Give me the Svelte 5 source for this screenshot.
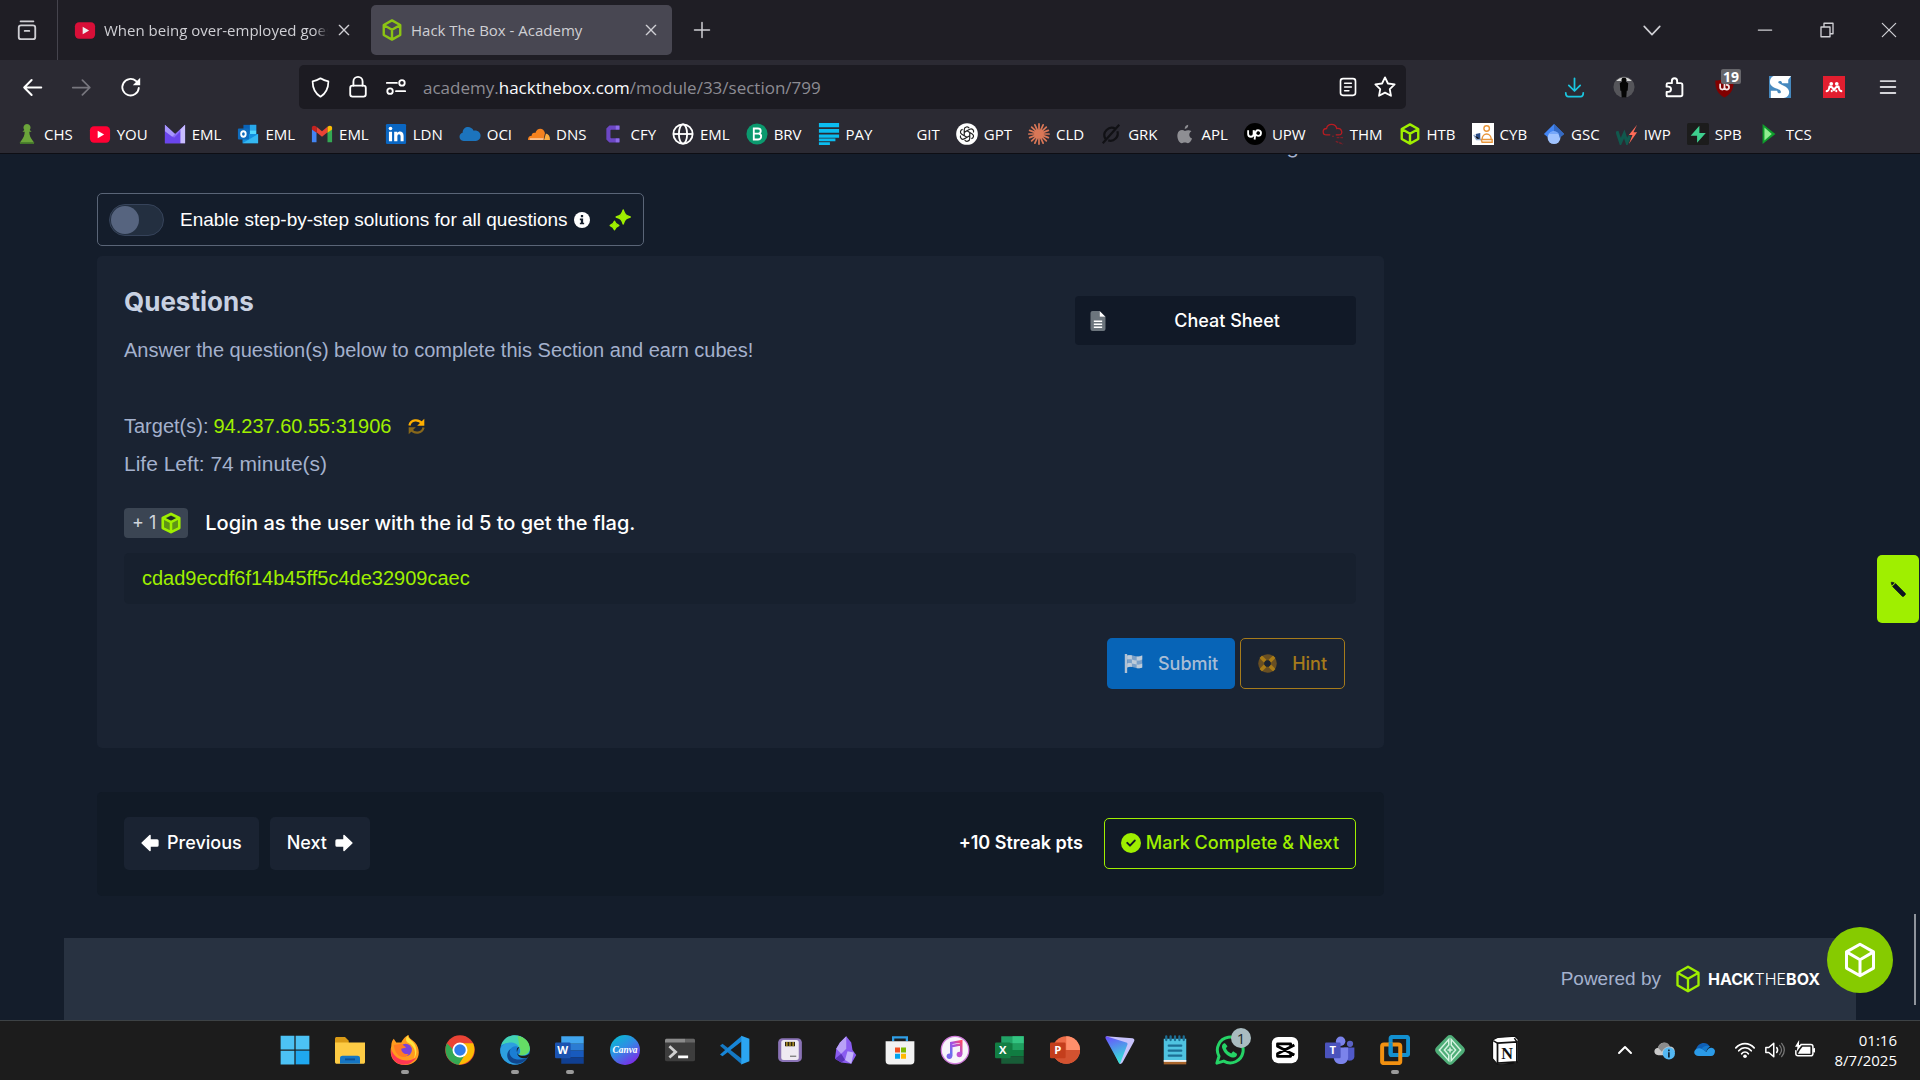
<script lang="ts">
	type Item = {
		icon: string;
		label: string;
		running?: boolean;
		badge?: string;
	};

	const bookmarks: Item[] = [
		{ icon: 'pawn', label: 'CHS' },
		{ icon: 'youtube', label: 'YOU' },
		{ icon: 'proton', label: 'EML' },
		{ icon: 'outlook', label: 'EML' },
		{ icon: 'gmail', label: 'EML' },
		{ icon: 'linkedin', label: 'LDN' },
		{ icon: 'cloud', label: 'OCI' },
		{ icon: 'cloudflare', label: 'DNS' },
		{ icon: 'cfy', label: 'CFY' },
		{ icon: 'globe', label: 'EML' },
		{ icon: 'brevo', label: 'BRV' },
		{ icon: 'pay', label: 'PAY' },
		{ icon: 'blank', label: 'GIT' },
		{ icon: 'gpt', label: 'GPT' },
		{ icon: 'claude', label: 'CLD' },
		{ icon: 'grok', label: 'GRK' },
		{ icon: 'apple', label: 'APL' },
		{ icon: 'upwork', label: 'UPW' },
		{ icon: 'thm', label: 'THM' },
		{ icon: 'htb', label: 'HTB' },
		{ icon: 'cyb', label: 'CYB' },
		{ icon: 'scholar', label: 'GSC' },
		{ icon: 'iwp', label: 'IWP' },
		{ icon: 'supabase', label: 'SPB' },
		{ icon: 'tcs', label: 'TCS' }
	];

	const apps: Item[] = [
		{ icon: 'windows', label: 'Start' },
		{ icon: 'explorer', label: 'File Explorer' },
		{ icon: 'firefox', label: 'Firefox', running: true },
		{ icon: 'chrome', label: 'Chrome' },
		{ icon: 'edge', label: 'Edge', running: true },
		{ icon: 'word', label: 'Word', running: true },
		{ icon: 'canva', label: 'Canva' },
		{ icon: 'terminal', label: 'Terminal' },
		{ icon: 'vscode', label: 'Visual Studio Code' },
		{ icon: 'disk', label: 'Disk tool' },
		{ icon: 'obsidian', label: 'Obsidian' },
		{ icon: 'store', label: 'Microsoft Store' },
		{ icon: 'itunes', label: 'iTunes' },
		{ icon: 'excel', label: 'Excel' },
		{ icon: 'powerpoint', label: 'PowerPoint' },
		{ icon: 'vpn', label: 'VPN' },
		{ icon: 'notepad', label: 'Notepad' },
		{ icon: 'whatsapp', label: 'WhatsApp', badge: '1' },
		{ icon: 'capcut', label: 'CapCut' },
		{ icon: 'teams', label: 'Teams' },
		{ icon: 'vmware', label: 'VMware', running: true },
		{ icon: 'keeper', label: 'Passwords' },
		{ icon: 'notion', label: 'Notion' }
	];

	const cube = 'M12 1.5 21 6.6v10.8l-9 5.1-9-5.1V6.6zM3 6.6l9 5.2 9-5.2M12 11.8v10.7';
	const line = 'fill="none" stroke="currentColor" stroke-linecap="round" stroke-linejoin="round"';

	// every drawing lives in a 24x24 box
	const icons: Record<string, string> = {
		blank: '',
		// browser chrome
		view: `<g ${line} stroke-width="2"><rect x="3" y="7" width="18" height="15" rx="2.5"/><path d="M5 2.5h14M9.500 13h5"/></g>`,
		close: `<path ${line} stroke-width="2" d="M5 5l14 14M19 5 5 19"/>`,
		thinClose: `<path ${line} stroke-width="1.500" d="M4 4l16 16M20 4 4 20"/>`,
		plus: `<path ${line} stroke-width="1.800" d="M12 3v18M3 12h18"/>`,
		chevronDown: `<path ${line} stroke-width="1.800" d="M3.500 8l8.500 9 8.500-9"/>`,
		chevronUp: `<path ${line} stroke-width="2.600" d="M4 16l8-8 8 8"/>`,
		minimise: `<path ${line} stroke-width="1.500" d="M4 12h16"/>`,
		restore: `<path ${line} stroke-width="1.800" stroke-linecap="butt" d="M4 8h12v13H4zM8 7V3h12v14h-3"/>`,
		back: `<path ${line} stroke-width="2.300" d="M22 12H2.500M11 3.500 2.500 12l8.500 8.500"/>`,
		forward: `<path ${line} stroke-width="2" d="M2 12h19.500M13 3.500l8.500 8.500-8.500 8.500"/>`,
		reload: `<path ${line} stroke-width="2" d="M20.500 13a9 9 0 1 1-3-7.500l2.500 2"/><path fill="currentColor" d="M22 2v8h-8z"/>`,
		shield: `<path ${line} stroke-width="2" d="M12 1.500c3 2 6 3 9 3.500 0 8-2 13-9 17.500C5 18 3 13 3 5c3-.5 6-1.500 9-3.500z"/>`,
		lock: `<g ${line} stroke-width="2"><rect x="3.500" y="10.500" width="17" height="12" rx="2.500"/><path d="M7 10.500V6a5 5 0 0 1 10 0v4.500"/></g>`,
		permissions: `<g ${line} stroke-width="2"><path d="M2 7.500h11M12 16.500h10"/><circle cx="18.500" cy="7.500" r="3"/><circle cx="5.500" cy="16.500" r="3"/></g>`,
		reader: `<g ${line} stroke-width="2"><rect x="3" y="2" width="18" height="20" rx="3"/><path d="M8 7.500h8M8 12h8M8 16.500h5"/></g>`,
		star: `<path ${line} stroke-width="2" d="M12 1.500l3.200 6.700 7.300 1-5.300 5.100 1.300 7.300L12 18.100l-6.500 3.500 1.300-7.300L1.500 9.200l7.300-1z"/>`,
		download: `<path ${line} stroke-width="2" d="M12 1.500v14M5.500 9.500l6.500 6.500 6.500-6.500M2 18c0 3 1 4.500 3 4.500h14c2 0 3-1.500 3-4.500"/>`,
		ninja: `<circle cx="12" cy="12" r="11.500" fill="#55555a"/><path fill="#d8d8d8" d="M3.500 5.500C8 .5 16 .5 20.500 5.500z"/><path fill="#050505" d="M12 2a2.300 2.300 0 0 1 2 4l2.600 2-.6 8h-1l-.5 7.500H9.500L9 16H8l-.6-8L10 6a2.300 2.300 0 0 1 2-4z"/>`,
		puzzle: `<path ${line} stroke-width="2.200" d="M4 22h15a2 2 0 0 0 2-2V9a2 2 0 0 0-2-2h-4V4.500a3 3 0 0 0-6 0V7H4.500A1.500 1.500 0 0 0 3 8.500V11h2a2.800 2.800 0 0 1 0 6H3v4a1 1 0 0 0 1 1z"/>`,
		ublock: `<path fill="#800000" d="M12 1c3 2 6.500 3 10.500 3 0 9-2 15-10.500 19.500C3.500 19 1.500 13 1.500 4 5.500 4 9 3 12 1z"/><path fill="none" stroke="#f2e6e6" stroke-width="2" stroke-linecap="round" d="M7 8.500v3.300a2.500 2.500 0 0 0 5 0V8.500M12 11.800a2.600 2.600 0 0 0 5.200 0c0-1.800-1-2.800-2.700-2.800"/>`,
		scribe: `<path fill="#4689bf" d="M0 0h24v24H0z"/><path fill="#fff" d="M0 0h24l-3 4v4h-7c1-2.500-3-3.500-4-1.500 0 3 12 4 12 11 0 4-3 6.500-6 6.500H2v-8h7c0 3.500 4 3.500 4 1.500C13 13 1 14 1 6.500 1 3 3 1 5 0z"/>`,
		mendeley: `<path fill="#e21e2f" d="M0 0h24v24H0z"/><circle cx="9" cy="8.500" r="2" fill="#fff"/><circle cx="15" cy="8.500" r="2" fill="#fff"/><path fill="none" stroke="#fff" stroke-width="2.200" stroke-linecap="round" stroke-linejoin="round" d="M4 16.500c2 0 2.500-1.500 3-5 2.500 0 4 1.500 5 4 1-2.500 2.500-4 5-4 .5 3.500 1 5 3 5M9.500 16.500v-.5M14.500 16.500v-.5"/>`,
		menu: `<path ${line} stroke-width="2" d="M4 5.500h16M4 12h16M4 18.500h16"/>`,
		// bookmarks
		pawn: `<path fill="#6ba53a" d="M12 1a4 4 0 0 1 3 6.500l2 2h-2.500c0 4 1.500 7 4 10 1.500 1.500 1 3.500 0 3.500h-13c-1 0-1.500-2 0-3.500 2.500-3 4-6 4-10H7l2-2A4 4 0 0 1 12 1z"/><path fill="#42752a" d="M4 21h16c0 1.500-1 2-2 2H6c-1 0-2-.5-2-2z"/>`,
		youtube: `<rect x="1" y="3.500" width="22" height="18" rx="4.500" fill="#f03"/><path fill="#fff" d="M9.500 8.500v8l7-4z"/>`,
		youtubeDim: `<rect x="1" y="3.500" width="22" height="18" rx="4.500" fill="#d80f38"/><path fill="#eee" d="M9.500 8.500v8l7-4z"/>`,
		proton: `<path fill="#8a6cf7" d="M1 2l11 10L23 2v20H1z"/><path fill="#6a45ec" d="M1 22V8l10 8 7-7v13z"/><path fill="#a795ff" d="M1 2l11 10-3 3L1 9z"/><path fill="#c9bdff" d="M18 7l5-5v20h-5z"/>`,
		outlook: `<path fill="#0a63b8" d="M7 2h14v12H7z"/><path fill="#28a8ea" d="M14 2h7v6h-7z"/><path fill="#50d9ff" d="M14 8h7v5h-7z"/><path fill="#1490df" d="M6 12h17v10H6z"/><path fill="#35b8f1" d="M6 22l17-10v10z"/><rect x="1" y="6" width="12" height="12" rx="1" fill="#0f6cbd"/><ellipse cx="7" cy="12" rx="2.500" ry="3" fill="none" stroke="#fff" stroke-width="2"/>`,
		gmail: `<path fill="#4285f4" d="M1 21V6l5 4v11z"/><path fill="#34a853" d="M18 21V10l5-4v15z"/><path fill="#ea4335" d="M6 10V4l6 5 6-5v6l-6 5z"/><path fill="#c5221f" d="M1 7V5c0-2 2.500-3 5-1v6.500z"/><path fill="#fbbc04" d="M23 7V5c0-2-2.500-3-5-1v6.500z"/>`,
		linkedin: `<rect x="1" y="1" width="22" height="22" rx="1.500" fill="#0a66c2"/><circle cx="6" cy="6" r="2" fill="#fff"/><path fill="#fff" d="M4.300 9.500h3.400V20H4.300zM10 9.500h3.300v1.500c1.500-2.500 7-2.500 7 3V20H17v-5.500c0-3-3.500-3-3.500 0V20H10z"/>`,
		cloud: `<path fill="#1c74bd" d="M5 19.500C-1 19.500-.5 11 4 10.500 4 3.500 13 2 16 8.500c4-1 8 2 7.500 6-.2 3-2.500 5-5 5z"/>`,
		cloudflare: `<path fill="#f6821f" d="M0 18.500c0-3 1.500-4.500 4-4.500 0-2.500 2-4 4-3C9.500 5 17 4.500 18.500 11l-1.500 7.500z"/><path fill="#fbad41" d="M17.500 18.500l2-7c3 .5 4.500 3 4.500 7z"/><path stroke="#fff" d="M2 17.500h15"/>`,
		cfy: `<path fill="none" stroke="#6c47c4" stroke-width="4.500" d="M19 5H9L7 7v10l2 2h10"/><path stroke="#8d6ce8" stroke-width="4" d="M15 5h4M15 19h4"/>`,
		globe: `<g fill="none" stroke="#fff" stroke-width="2"><circle cx="12" cy="12" r="10.500"/><ellipse cx="12" cy="12" rx="4.500" ry="10.500"/><path d="M1.500 12h21"/></g>`,
		brevo: `<circle cx="12" cy="12" r="11.500" fill="#0b996e"/><path fill="none" stroke="#fff" stroke-width="2" d="M8.500 18V6h4.500c4 0 4 5 .5 5.500H9.500h4.500c4 1 3 6.500-1 6.500z"/>`,
		pay: `<path fill="#0bbdf0" d="M1 0h22v4.500H1zM1 6.500h22v4H1zM1 12.500h22v3.500H1zM1 17h18v3H1zM1 21h12v3H1z"/>`,
		gpt: `<circle cx="12" cy="12" r="11.800" fill="#fff"/><g fill="none" stroke="#222" stroke-width="1.300"><path d="M9 10.300V7.200c0-3 4-4 5.500-1.500M15 10.300 12 8.500l-3 1.800v3.500l3 1.800 3-1.800zM15 10.300l2.700 1.600c2.500 1.500 1.500 5-1 5.200M15 13.800V17c0 3-4 4-5.500 1.500M9 13.800l-2.700-1.600c-2.500-1.500-1.500-5 1-5.200M12 8.500l3-1.700c2.500-1.500 5 1.200 4 3.600M12 15.600l-3 1.700c-2.500 1.500-5-1.200-4-3.600"/></g>`,
		claude: `<path stroke="#d97757" stroke-width="1.900" stroke-linecap="round" d="M12 1v22M1 12h22M4 4.500l16 15M20 4.500l-16 15M7.500 2l9 20M16.500 2l-9 20M1.800 8l20.400 8M22.200 8 1.800 16"/>`,
		grok: `<g fill="none" stroke="#111115" stroke-width="2.400"><path d="M17 6.500a8 8 0 0 0-11 11M19 9a8 8 0 0 1-10 10"/><path d="M3 22 21 2"/></g>`,
		apple: `<path fill="#8e8e93" d="M15.500 2c.3 2.700-1.800 4.500-3.800 4.500C11.500 4.200 13.300 2.300 15.500 2zM19 9c-3.600 2.300-2.700 6.700.7 8-.9 2.700-2.700 5-4.500 5-1.300 0-1.800-.7-3.400-.7s-2 .7-3.400.7C5.600 22 3 16.300 3.800 12.200c.8-4.500 5-5.400 8.100-3.600 2.200-1 5.400-1 7.100.4z"/>`,
		upwork: `<circle cx="12" cy="12" r="12" fill="#000"/><path fill="none" stroke="#fff" stroke-width="2" d="M4.500 8v4a3 3 0 0 0 6 0V8c1 4 2.500 6 5 6a3 3 0 1 0-2.800-4L11.500 18"/>`,
		thm: `<path fill="none" stroke="#b91c22" stroke-width="1.400" d="M5 13c-5 0-5-7 0-7 1-6 10-6 11 0 6-1 8 7 2 7h-3M4 13h5M12 14v1"/><path stroke="#7d1f28" stroke-width="1.500" stroke-dasharray="3 1" d="M16 16h7M15 20l8 3"/>`,
		htb: `<path fill="none" stroke="#9fef00" stroke-width="2.600" stroke-linejoin="round" d="${cube}"/>`,
		htbDim: `<path fill="none" stroke="#8cc414" stroke-width="2.600" stroke-linejoin="round" d="${cube}"/>`,
		cyb: `<path fill="#fff" d="M0 0h24v24H0z"/><g fill="none" stroke="#e8953a" stroke-width="1.500"><circle cx="16" cy="6" r="3"/><path d="M11 18c0-8 10-8 10 0M10 18h12v3H11z"/></g><path fill="#2a4c86" d="M4 12l5-1v6l-4 1z"/><path stroke="#8fa8cd" stroke-width="1.500" d="M2 13l3 5h5"/>`,
		scholar: `<path fill="#4285f4" d="M12 1 23 12l-5 4H6l-5-4z"/><circle cx="12" cy="16" r="7" fill="#a0c3ff"/><path fill="#356ac3" d="M12 1 23 12l-5 4c0-4-3-7-6-7z"/><path fill="#76a7fa" d="M6.500 12a6.500 6.500 0 0 1 11 0z"/>`,
		iwp: `<path fill="none" stroke="#11584d" stroke-width="3.500" d="M1 9l4 12 4-9 3 9 3-7"/><path fill="#ff6b57" d="M23 2l-9 11h4l-4 10 9-13h-4z"/>`,
		supabase: `<rect width="24" height="24" rx="2" fill="#1c1c1c"/><path fill="#3ecf8e" d="M13.500 3v8h7L11 21.500V14H4z"/>`,
		tcs: `<path fill="#0f9d2c" d="M5 1l14 11L5 23z"/><path fill="#90ee90" d="M7 5l8 7-8 7z"/>`,
		// page
		info: `<circle cx="12" cy="12" r="12" fill="#fff"/><path fill="#141d2b" d="M10.300 4.500h3.400v3.300h-3.400zM8.800 9.800h4.900v6.400h1.500v2.300H8.800v-2.300h1.500v-4H8.800z"/>`,
		sparkles: `<path fill="#9fef00" stroke="#9fef00" stroke-width="1.500" stroke-linejoin="round" d="M15.500 1c1.600 5 2.700 6.100 7.700 7.700-5 1.600-6.100 2.700-7.700 7.700-1.600-5-2.700-6.100-7.700-7.700 5-1.600 6.100-2.700 7.700-7.700zM6 13.300c1 3 1.700 3.700 4.700 4.700-3 1-3.700 1.700-4.700 4.700-1-3-1.700-3.700-4.700-4.700 3-1 3.700-1.700 4.700-4.700z"/>`,
		file: `<path fill="#6c757d" d="M3 2.500A2.500 2.500 0 0 1 5.500 0H14v7h7v14.500a2.500 2.500 0 0 1-2.500 2.500h-13A2.500 2.500 0 0 1 3 21.500z"/><path fill="#fff" d="M14 0l7 7h-7zM7 11.500h10v1.800H7zM7 15h10v1.800H7zM7 18.500h10v1.800H7z"/>`,
		refresh: `<path fill="none" stroke="#ffaf00" stroke-width="3.200" d="M2 10.500C4 2 15 1 20 8"/><path fill="#ffaf00" d="M23 1v10H13z"/><path fill="none" stroke="#87671b" stroke-width="3.200" d="M22 13.500C20 22 9 23 4 16"/><path fill="#87671b" d="M1 23V13h10z"/>`,
		cubeSolid: `<path fill="#5e9317" d="M12 1 22 6v12l-10 5.500L2 18V6z"/><path fill="#1c2a26" d="M12 4l6 3-6 3-6-3z"/><path fill="none" stroke="#9fef00" stroke-width="2.800" stroke-linejoin="round" d="M12 2l9 4.500v11L12 22l-9-4.500v-11zM3 6.500l9 4.500 9-4.500M12 11v11"/>`,
		flag: `<path fill="#b1c1d3" d="M1 0h3v24H1z"/><path fill="#7aa0c8" d="M4 2c6-3 10 3 19 0v15c-8 3-12-3-19 0z"/><path fill="#bdcbd9" d="M4 2c2-.8 4-.7 6 0v5c-2-.7-4-.6-6 0zM16 3.500c2 .3 4 0 7-1.500v5c-3 1.500-5 1.600-7 1.300zM10 7c2 .5 4 1.200 6 1.300v5C14 13 12 12.400 10 12zM4 12c2-.7 4-.7 6 0v4.500c-2-.5-4-.5-6 .5zM16 13.300c2 .4 5 0 7-1.300v5c-3 1-5 1.200-7 1z"/>`,
		lifebuoy: `<circle cx="12" cy="12" r="8" fill="none" stroke="#694f22" stroke-width="7.500"/><path stroke="#a97b16" stroke-width="4.500" d="M3.500 3.500l5.500 5.500M20.500 3.500 15 9M3.500 20.500 9 15M20.500 20.500 15 15"/>`,
		arrowLeft: `<path fill="#fff" stroke="#fff" stroke-width="2" stroke-linejoin="round" d="M1.500 12 12 2v6h9.500c.6 0 1 .4 1 1v6c0 .6-.4 1-1 1H12v6z"/>`,
		arrowRight: `<path fill="#fff" stroke="#fff" stroke-width="2" stroke-linejoin="round" d="M22.500 12 12 2v6H2.500c-.6 0-1 .4-1 1v6c0 .6.4 1 1 1H12v6z"/>`,
		check: `<circle cx="12" cy="12" r="12" fill="#9fef00"/><path fill="none" stroke="#111a24" stroke-width="2.400" stroke-linecap="round" stroke-linejoin="round" d="M7.500 11.800l3.300 3.300 5.700-6"/>`,
		pencil: `<path fill="#0d1420" stroke="#0d1420" stroke-linejoin="round" d="M3 1.800l3.500 1L3 6.300l-1.200-3.500C1.500 2 2 1.500 3 1.800zM8.300 3.800 20.500 16l2.200 2.200c.8.800.8 1.800.1 2.500l-2.100 2.100c-.7.700-1.700.7-2.500-.1L3.800 8.300z"/>`,
		logo: `<path fill="none" stroke="currentColor" stroke-width="2" stroke-linejoin="round" d="${cube}"/>`,
		// taskbar
		windows: `<path fill="#4cc2f5" d="M.500.500h11v11H.500zM12.500.500h11v11h-11zM.500 12.500h11v11H.500z"/><path fill="#1fa8f0" d="M12.500 12.500h11v11h-11z"/>`,
		explorer: `<path fill="#d99a16" d="M0 3c0-1 .500-1.500 1.500-1.500H8l3 3v4H0z"/><path fill="#fdcb44" d="M0 6h24v15.500c0 .8-.5 1.500-1.500 1.500h-21c-1 0-1.500-.7-1.500-1.500z"/><path fill="#1576c4" d="M4 23v-4.500C4 17 5 16.500 6 16.500h12c1 0 2 .5 2 2V23z"/><path stroke="#0c4f94" stroke-width="1.500" d="M8 19.500h8"/>`,
		firefox: `<path fill="#ff9b1e" d="M1 9c0-3 1-5 2-6l2 3 4 0c2-4 4-5 6-6 0 3 2 3 5 6 6 7 3 18-8 18C3 24-1 17 1 9z"/><path fill="#ffe23e" d="M14 0c0 3 4 4 6 8 2 5 1 9-1 11 3-7-1-11-5-13-2-2-1-4 0-6z"/><path fill="#ff3753" d="M1 11c2 9 13 12 20 7-5 8-17 8-20-2z"/><circle cx="12.500" cy="12" r="5" fill="#7a42d9"/><path fill="#ff7b24" d="M3 8l6-1 4 3-4 1c0 3 3 5 6 4-3 5-11 3-12-7z"/>`,
		chrome: `<circle cx="12" cy="12" r="11.800" fill="#ea4335"/><path fill="#34a853" d="M1.500 6.500C-2 14 3 23 11 23.800L17 15l-5 2z"/><path fill="#fbbc04" d="M12 6.500h10.500C26 15 20 23.500 11 23.800L17 14z"/><circle cx="12" cy="12" r="6" fill="#fff"/><circle cx="12" cy="12" r="4.600" fill="#2f7de9"/>`,
		edge: `<circle cx="12" cy="12" r="11.800" fill="#1a7ed4"/><path fill="#43d4b4" d="M1 8.500C4-3 21-2.500 23.800 10.500c.5 5-5 7-9 5.500 1-1 1.500-2 1.200-4C15.500 7 6 4.500 1 8.500z"/><path fill="#65dc65" d="M14 .500c6 1 10 5 9.800 10.500-.5 4-5 6-9 5 2-1 2-4 1-6z"/><path fill="#2d9fe0" d="M.3 11C3 4 14 5 15 10c-2-2-6-1-7 2-2 7 4 11 9 10.500C8 26-.7 20 .3 11z"/><path fill="#10468d" d="M8.500 11c-3 6 3 11 13 7.500C18 24 8 25 6 18c-.8-3 .5-5.500 2.500-7z"/><path fill="#1c1c1c" d="M15.500 10c-2-1-3 3-1 5.500 2 1.500 7 1.500 9-1 0 2-1 4-3 4-6 1-9-5-5-8.500z"/>`,
		word: `<path fill="#41a5ee" d="M5 1h18v6H5z"/><path fill="#2b7cd3" d="M5 7h18v5.500H5z"/><path fill="#185abd" d="M5 12.500h18V18H5z"/><path fill="#103f91" d="M5 18h18v5H5z"/><rect y="6" width="12.500" height="12.500" rx="1" fill="#1b53b0"/><text x="6.200" y="15.500" font-size="9" font-weight="700" font-family="Open Sans, sans-serif" text-anchor="middle" fill="#fff">W</text>`,
		canva: `<defs><linearGradient id="canva" x1="0" y1="0" x2=".7" y2="1"><stop stop-color="#00c4cc"/><stop offset=".5" stop-color="#2f8de4"/><stop offset="1" stop-color="#7d2ae8"/></linearGradient></defs><circle cx="12" cy="12" r="12" fill="url(#canva)"/><text x="12" y="14.500" font-size="7.500" font-weight="700" font-style="italic" font-family="Liberation Serif, serif" text-anchor="middle" fill="#fff">Canva</text>`,
		terminal: `<rect y="3" width="24" height="18" rx="1.500" fill="#3d3d3d"/><path fill="#8b8b8b" d="M0 4.500C0 3.500.500 3 1.500 3H16v3H0z"/><path fill="#666" d="M16 3h6.500c1 0 1.500.5 1.500 1.500V6h-8z"/><path fill="none" stroke="#d0d0d0" stroke-width="2.200" d="M3.500 9l5 4.500-5 4.500"/><path stroke="#fff" stroke-width="2.200" d="M10.500 17.500h8"/>`,
		vscode: `<path fill="#1579c4" d="M0 8.500l2-1.500L17.500 19v4.500z"/><path fill="#1786d8" d="M0 15.500l2 1.500L17.500 5V.500z"/><path fill="#2ba5f2" d="M17 .500 23.500 3v18L17 23.500z"/>`,
		disk: `<rect x="2.500" y="2.500" width="19" height="19" rx="3.500" fill="#8a73b5"/><rect x="5" y="4" width="14" height="16" rx="2" fill="#eeeaf2"/><path fill="#2b2614" d="M8 5.500h8V9H8z"/><path stroke="#c7a72b" stroke-width="1" d="M9.500 5.500V9M12 5.500V9M14.500 5.500V9"/><path stroke="#777" d="M12 17h5"/>`,
		obsidian: `<path fill="#8a5cf0" d="M13 1l4 5 1 6 3 4-4 7-8-1-5-3 1-8 3-5z"/><path fill="#b9a1f7" d="M13 1 8 6l-3 5 4 4 4-4z"/><path fill="#5a33b8" d="M9 15l-5 4 5 3 3-2z"/><path fill="#c3b2fb" d="M14 13l5 1-2 9-5-3z"/>`,
		store: `<path fill="none" stroke="#2f9ee6" stroke-width="1.800" d="M6.500 5V1.800h11V5"/><path fill="#f2f2f2" d="M.500 5h23v15.500c0 2-1 3-3 3h-17c-2 0-3-1-3-3z"/><path fill="#f25022" d="M8 10h4v4H8z"/><path fill="#7fba00" d="M12.800 10h4v4h-4z"/><path fill="#00a4ef" d="M8 15h4v4H8z"/><path fill="#ffb900" d="M12.800 15h4v4h-4z"/>`,
		itunes: `<defs><linearGradient id="itunes" x1="0" y1="1" x2="1" y2="0"><stop stop-color="#5a7cf2"/><stop offset=".5" stop-color="#a84fe0"/><stop offset="1" stop-color="#fb4a6b"/></linearGradient></defs><circle cx="12" cy="12" r="11" fill="#f7f5fa" stroke="#d27cdc" stroke-width="1"/><path fill="none" stroke="url(#itunes)" stroke-width="2" d="M9 17V6.500l8-1.500v10.500M9 9l8-1.500"/><circle cx="7.500" cy="17" r="2.200" fill="#7a68ec"/><circle cx="15.500" cy="15.500" r="2.200" fill="#c050d0"/>`,
		excel: `<path fill="#21a366" d="M5 1h18v6H5z"/><path fill="#33c481" d="M14 1h9v6h-9z"/><path fill="#107c41" d="M5 7h18v10H5z"/><path fill="#1f9f5f" d="M14 7h9v5h-9z"/><path fill="#185c37" d="M5 17h18v6H5z"/><rect y="6" width="12.500" height="12.500" rx="1" fill="#127e43"/><text x="6.200" y="15.500" font-size="9" font-weight="700" font-family="Open Sans, sans-serif" text-anchor="middle" fill="#fff">X</text>`,
		powerpoint: `<circle cx="13" cy="12" r="11" fill="#ed6c47"/><path fill="#ff8f6b" d="M13 1a11 11 0 0 1 11 11H13z"/><path fill="#d35230" d="M2 12h22a11 11 0 0 1-22 0z"/><rect y="6" width="12.500" height="12.500" rx="1" fill="#c43e1c"/><text x="6.200" y="15.500" font-size="9" font-weight="700" font-family="Open Sans, sans-serif" text-anchor="middle" fill="#fff">P</text>`,
		vpn: `<defs><linearGradient id="vpn" x1="0" y1="0" x2=".3" y2="1"><stop stop-color="#6d4aff"/><stop offset="1" stop-color="#36e0d8"/></linearGradient></defs><path fill="#c8c3fb" d="M1 1l21 1.500c1.500.3 2 1.500 1 3L14 22c-1 1.500-2.500 1.500-3 0z"/><path fill="url(#vpn)" d="M1 1l16 5c1 .3 1.300 1 .800 2L12 23c-.5-.3-.8-.6-1-1L.600 3C.200 2 .300 1.300 1 1z"/>`,
		notepad: `<path fill="#4fc3e0" d="M3 3h18v18H3z"/><path fill="#a8652b" d="M3 21h18v2.500H3z"/><path fill="#f4f4f4" d="M3 20h18v1.500H3z"/><path stroke="#1c6f95" stroke-width="1.800" stroke-linecap="round" d="M7 8.500h10M7 12.500h10M7 16.500h10M5 1v3M8.500 1v3M12 1v3M15.500 1v3M19 1v3"/>`,
		whatsapp: `<path fill="none" stroke="#25d366" stroke-width="2.400" stroke-linejoin="round" d="M1.500 22.500 3.200 17A10.300 10.300 0 1 1 7 20.900z"/><path fill="#25d366" d="M8 6.500c-2 0-3 2-2 4.500 1.500 4 5 6.500 8 7 2 .3 4-1 3.500-3L14.500 13l-1.500 1.800c-2-.8-3.500-2.300-4.300-4.200L10 9z"/>`,
		capcut: `<rect x="1.500" y="1.500" width="21" height="21" rx="5" fill="#fff"/><path fill="none" stroke="#000" stroke-width="2.200" stroke-linejoin="round" d="M19.500 16 6 9V7h10.500v2M19.500 8 6 15v2h10.500v-2"/>`,
		teams: `<circle cx="20" cy="7" r="2.500" fill="#5b62c4"/><path fill="#5059c9" d="M15 10h8.500v7c0 4-6 5-7 1z"/><circle cx="12.500" cy="5" r="3.800" fill="#7b83eb"/><path fill="#7b83eb" d="M7 10h11.500v8c0 7-11.500 7-11.500 0z"/><rect y="6" width="12.500" height="12.500" rx="1" fill="#4b53bc"/><text x="6.200" y="15.500" font-size="9" font-weight="700" font-family="Open Sans, sans-serif" text-anchor="middle" fill="#fff">T</text>`,
		vmware: `<rect x="8.500" y="1.500" width="14" height="14.500" rx="1.500" fill="none" stroke="#1290d0" stroke-width="3.200"/><rect x="1.700" y="7.500" width="14.500" height="15" rx="1.500" fill="none" stroke="#f29111" stroke-width="3.200"/><path fill="none" stroke="#1290d0" stroke-width="3.200" d="M8.500 6v9c0 .6.400 1 1 1h5"/>`,
		keeper: `<path fill="#4fae78" d="M9.500 1.200c1.500-1.500 3.500-1.500 5 0l8.300 8.300c1.500 1.500 1.500 3.500 0 5l-8.300 8.300c-1.500 1.500-3.500 1.500-5 0l-8.300-8.300c-1.500-1.500-1.500-3.500 0-5z"/><g fill="none" stroke="#d5f3e1" stroke-width="1.200"><path d="M11 3.500 3.500 12l7.500 8.500V16l-3.500-4L11 8zM13 3.500l7.500 8.500-7.500 8.500V16l3.500-4L13 8z"/><path d="M10 12h4M12 10v4"/></g>`,
		notion: `<path fill="#fff" stroke="#111" stroke-width="1" d="M2 4l4-2 14-1 2.500 2.500V21l-1.500 1.500L6 23.500 2 19z"/><path fill="#fff" stroke="#111" stroke-width="1.400" d="M6 6.500l15.500-1v16L6 22.500z"/><path fill="none" stroke="#111" stroke-width="1.200" d="M2.500 4.500 6 6.500M21.500 5.500l-2-3"/><text x="13.700" y="19" font-size="13" font-weight="700" font-family="Liberation Serif, serif" text-anchor="middle" fill="#111">N</text>`,
		// tray
		cloudInfo: `<path fill="#c9c9c9" d="M5 18.500c-6 0-6-8-.5-8.500C6 3 15 2 18 8.500c4 0 6 3 5.500 6l-5 4z"/><path fill="#8b8b8b" d="M8 5.500c4-3 9-1 10 3-5 0-7 3-9 6L4.500 10C5 8 6 6.500 8 5.500z"/><circle cx="17" cy="16.500" r="7" fill="#54b8f3"/><path fill="#102a3d" d="M16 12h2v2h-2zM16 15h2v6h-2z"/>`,
		onedrive: `<path fill="#0f5fb5" d="M2 12.500C4 4 14 1.500 18 8.500l-8 8z"/><path fill="#2b9be8" d="M5.500 19.500c-7 0-7-8.500 0-9 4-.5 6 3 9 4 1-5 8-6.500 9.500-1 0 4-2 6-4.500 6z"/><path fill="#1478cc" d="M9 11c2-4 8-4 9.500-2-3 0-4 3-4 5.500z"/>`,
		wifi: `<g ${line} stroke-width="2"><path d="M1 9.500c6-7 16-7 22 0M4.500 13c4-5 11-5 15 0M8 16.500c2-2.800 6-2.800 8 0"/></g><circle cx="12" cy="19.500" r="2.200" fill="currentColor"/>`,
		volume: `<path ${line} stroke-width="1.800" d="M1 9v6h3.500l6 5V4l-6 5zM14 9c1.500 2 1.500 4 0 6"/><path ${line} stroke-width="1.500" stroke-opacity=".4" d="M17.500 6.500c3 3.500 3 7.500 0 11M20 4c4 5 4 11 0 16"/>`,
		battery: `<path ${line} stroke-width="1.800" d="M7 5.500h12c1.500 0 2.500 1 2.500 2.500v8.500c0 1.500-1 2.500-2.500 2.500H3.500C2 19 1 18 1 16.500V13M23.300 10.500v3.500"/><path fill="currentColor" d="M9 8h9.500v8.500h-15L6 12zM5 0 0 8h3l-1 6 6-8H4.800z"/>`
	};

	let answer = $state('cdad9ecdf6f14b45ff5c4de32909caec');
	let stepByStep = $state(false);
</script>

{#snippet icon(name: string, size: number)}
	<svg class="icon" viewBox="0 0 24 24" width={size} height={size} aria-hidden="true">
		{@html icons[name]}
	</svg>
{/snippet}

<div class="screen">
	<header class="chrome">
		<div class="tabs">
			<button class="view" aria-label="Firefox View">{@render icon('view', 22)}</button>
			<div class="tab">
				{@render icon('youtubeDim', 22)}
				<span class="tab-title fade">When being over-employed goes</span>
				<button class="tab-close" aria-label="Close tab">{@render icon('close', 16)}</button>
			</div>
			<div class="tab active">
				{@render icon('htbDim', 22)}
				<span class="tab-title">Hack The Box - Academy</span>
				<button class="tab-close" aria-label="Close tab">{@render icon('close', 16)}</button>
			</div>
			<button class="new-tab" aria-label="New tab">{@render icon('plus', 20)}</button>
			<button class="list-tabs" aria-label="List all tabs">{@render icon('chevronDown', 22)}</button>
			<div class="window-buttons">
				<button aria-label="Minimise">{@render icon('minimise', 20)}</button>
				<button aria-label="Restore">{@render icon('restore', 18)}</button>
				<button aria-label="Close window">{@render icon('thinClose', 20)}</button>
			</div>
		</div>

		<div class="toolbar">
			<div class="nav-buttons">
				<button aria-label="Back">{@render icon('back', 21)}</button>
				<button class="dim" aria-label="Forward">{@render icon('forward', 21)}</button>
				<button aria-label="Reload">{@render icon('reload', 22)}</button>
			</div>
			<div class="urlbar">
				{@render icon('shield', 21)}
				{@render icon('lock', 22)}
				{@render icon('permissions', 22)}
				<span class="url">academy.<b>hackthebox.com</b>/module/33/section/799</span>
				{@render icon('reader', 20)}
				{@render icon('star', 22)}
			</div>
			<div class="extensions">
				<button class="cyan" aria-label="Downloads">{@render icon('download', 21)}</button>
				<button aria-label="Ninja">{@render icon('ninja', 22)}</button>
				<button aria-label="Extensions">{@render icon('puzzle', 21)}</button>
				<button class="blocker" aria-label="uBlock Origin">
					{@render icon('ublock', 21)}
					<span class="count">19</span>
				</button>
			</div>
			<div class="extensions wide">
				<button aria-label="Scribe">{@render icon('scribe', 22)}</button>
				<button aria-label="Mendeley">{@render icon('mendeley', 22)}</button>
				<button class="muted" aria-label="Open menu">{@render icon('menu', 22)}</button>
			</div>
		</div>

		<nav class="bookmarks" aria-label="Bookmarks">
			{#each bookmarks as b}
				<a href="#{b.icon}">{@render icon(b.icon, 22)}{b.label}</a>
			{/each}
		</nav>
	</header>

	<main class="page">
		<span class="cut-line">g</span>
		<div class="columns">
			<div class="content">
				<label class="solutions">
					<input type="checkbox" role="switch" bind:checked={stepByStep} />
					<span>Enable step-by-step solutions for all questions</span>
					{@render icon('info', 16)}
					<span class="spark">{@render icon('sparkles', 22)}</span>
				</label>

				<section class="panel">
					<div class="panel-head">
						<div>
							<h2>Questions</h2>
							<p>Answer the question(s) below to complete this Section and earn cubes!</p>
						</div>
						<button class="cheat">{@render icon('file', 20)}<span>Cheat Sheet</span></button>
					</div>
					<p class="target">
						Target(s): <a href="#target">94.237.60.55:31906</a>
						<button class="reset" aria-label="Reset target">{@render icon('refresh', 17)}</button>
					</p>
					<p class="life">Life Left: 74 minute(s)</p>
					<div class="question">
						<span class="points">+ 1{@render icon('cubeSolid', 22)}</span>
						<label for="answer">Login as the user with the id 5 to get the flag.</label>
					</div>
					<input id="answer" class="answer" type="text" bind:value={answer} />
					<div class="actions">
						<button class="submit">{@render icon('flag', 19)}Submit</button>
						<button class="hint">{@render icon('lifebuoy', 19)}Hint</button>
					</div>
				</section>

				<section class="pager">
					<button class="step">{@render icon('arrowLeft', 18)}Previous</button>
					<button class="step">Next{@render icon('arrowRight', 18)}</button>
					<span class="streak">+10 Streak pts</span>
					<button class="complete">{@render icon('check', 20)}Mark Complete &amp; Next</button>
				</section>
			</div>
		</div>

		<footer class="footer">
			<span>Powered by</span>
			<a class="brand" href="#hackthebox">
				{@render icon('logo', 28)}
				<span class="wordmark">HACK<i>THE</i>BOX</span>
			</a>
		</footer>

		<button class="notes" aria-label="Notes">{@render icon('pencil', 16)}</button>
		<button class="chat" aria-label="Help">{@render icon('logo', 36)}</button>
		<span class="scroll-thumb"></span>
	</main>

	<div class="taskbar">
		<div class="apps">
			{#each apps as app}
				<button class:running={app.running} aria-label={app.label}>
					{@render icon(app.icon, 30)}
					{#if app.badge}<span class="app-badge">{app.badge}</span>{/if}
				</button>
			{/each}
		</div>
		<div class="tray">
			<button aria-label="Hidden icons">{@render icon('chevronUp', 18)}</button>
			<button aria-label="Sync status">{@render icon('cloudInfo', 21)}</button>
			<button aria-label="OneDrive">{@render icon('onedrive', 21)}</button>
			<button class="system" aria-label="Network, volume and battery">
				{@render icon('wifi', 20)}
				{@render icon('volume', 20)}
				{@render icon('battery', 20)}
			</button>
		</div>
		<div class="clock">
			<time>01:16</time>
			<time>8/7/2025</time>
		</div>
	</div>
</div>

<style>
	:global(body) {
		background: #141d2b;
	}
	.screen {
		min-height: 100vh;
		display: flex;
		flex-direction: column;
		font-family: 'Inter', 'Liberation Sans', sans-serif;
		color: #fff;
	}
	.screen * {
		box-sizing: border-box;
	}
	button {
		border: 0;
		padding: 0;
		background: none;
		color: inherit;
		font: inherit;
		display: flex;
		align-items: center;
		justify-content: center;
	}
	a {
		color: inherit;
		text-decoration: none;
	}
	h2,
	p {
		margin: 0;
	}
	.icon {
		display: block;
		flex: none;
	}

	.chrome {
		font-family: 'Open Sans', 'Noto Sans', sans-serif;
		font-size: 15px;
		background: #2b2a33;
		border-bottom: 1px solid #0e0e14;
	}
	.tabs {
		display: flex;
		align-items: center;
		height: 60px;
		background: #1f1e25;
		color: #cfcfd4;
	}
	.view {
		width: 58px;
		height: 60px;
		padding-right: 4px;
		border-right: 1px solid #45444d;
		margin-right: 6px;
	}
	.tab {
		width: 301px;
		height: 50px;
		padding: 0 13px 0 10px;
		margin-right: 6px;
		border-radius: 5px;
		display: flex;
		align-items: center;
		gap: 8px;
	}
	.tab.active {
		background: #484752;
		margin-right: 16px;
	}
	.tab-title {
		flex: 1;
		overflow: hidden;
		white-space: nowrap;
	}
	.fade {
		mask-image: linear-gradient(to right, #000 94%, transparent);
	}
	.new-tab {
		width: 28px;
	}
	.list-tabs {
		margin-left: auto;
		width: 48px;
	}
	.window-buttons {
		display: flex;
		margin-left: 58px;
	}
	.window-buttons button {
		width: 62px;
		height: 60px;
	}

	.toolbar {
		display: flex;
		align-items: center;
		height: 54px;
		padding: 0 5px 0 8px;
	}
	.nav-buttons,
	.extensions {
		display: flex;
	}
	.nav-buttons button {
		width: 49px;
	}
	.dim {
		color: #77767e;
	}
	.urlbar {
		flex: 1;
		min-width: 0;
		height: 44px;
		margin: 0 143px 0 144px;
		padding: 0 10px 0 11px;
		border-radius: 5px;
		background: #1c1b22;
		display: flex;
		align-items: center;
		gap: 16px;
		font-size: 17px;
	}
	.url {
		flex: 1;
		overflow: hidden;
		white-space: nowrap;
		color: #8d8c93;
	}
	.url b {
		font-weight: 400;
		color: #fbfbfe;
	}
	.extensions button {
		width: 50px;
	}
	.extensions.wide {
		margin-left: 4px;
	}
	.extensions.wide button {
		width: 54px;
	}
	.cyan {
		color: #1ac6e0;
	}
	.muted {
		color: #d5d5da;
	}
	.blocker {
		position: relative;
	}
	.count {
		position: absolute;
		left: 22px;
		top: -7px;
		padding: 0 2px;
		border-radius: 2px;
		background: #66666b;
		font-size: 14px;
		font-weight: 700;
		line-height: 15px;
	}
	.bookmarks {
		display: flex;
		align-items: center;
		gap: 16px;
		height: 39px;
		padding: 0 16px;
		white-space: nowrap;
	}
	.bookmarks a {
		display: flex;
		align-items: center;
		gap: 6px;
	}

	.page {
		flex: 1;
		position: relative;
		overflow: hidden;
		display: flex;
		flex-direction: column;
		padding: 39px 64px 0;
		color: #a4b1cd;
		font-size: 20px;
		line-height: 30px;
	}
	.page p,
	.answer,
	.footer,
	.solutions {
		font-family: 'Liberation Sans', Arial, sans-serif;
	}
	.cut-line {
		position: absolute;
		top: -23px;
		left: 67%;
	}
	.columns {
		flex: 1;
		display: grid;
		grid-template-columns: minmax(0, 30fr) minmax(0, 11fr);
		padding: 0 0 42px 33px;
	}
	.solutions {
		display: flex;
		align-items: center;
		width: fit-content;
		height: 53px;
		padding: 0 12px 0 11px;
		border: 1px solid #5a6577;
		border-radius: 5px;
		margin-bottom: 10px;
		color: #fff;
		font-size: 19px;
		white-space: nowrap;
		gap: 6px;
	}
	.solutions input {
		appearance: none;
		width: 55px;
		height: 32px;
		margin: 0 10px 0 0;
		padding: 1px;
		border: 1px solid #36435a;
		border-radius: 16px;
		background: #232f40;
	}
	.solutions input::before {
		content: '';
		display: block;
		width: 28px;
		height: 28px;
		border-radius: 50%;
		background: #56647f;
	}
	.spark {
		margin-left: 13px;
	}

	.panel {
		padding: 27px 28px 59px 27px;
		border-radius: 5px;
		background: #1a2332;
	}
	.panel-head {
		display: flex;
		justify-content: space-between;
		align-items: flex-start;
	}
	h2 {
		margin-bottom: 14px;
		font-size: 26px;
		line-height: 38px;
		font-weight: 700;
		color: #c8d1e2;
	}
	.cheat {
		width: 281px;
		height: 49px;
		margin-top: 13px;
		padding: 0 10px 0 13px;
		border-radius: 4px;
		background: #111927;
		color: #fff;
		font-size: 18px;
		font-weight: 500;
	}
	.cheat span {
		flex: 1;
	}
	.target {
		display: flex;
		align-items: center;
		gap: 5px;
		margin-top: 46px;
	}
	.target a {
		color: #9fef00;
	}
	.reset {
		margin-left: 12px;
	}
	.life {
		margin-top: 8px;
		font-size: 21px;
	}
	.question {
		display: flex;
		align-items: center;
		gap: 17px;
		margin: 29px 0 15px;
		color: #fff;
		font-weight: 500;
	}
	.points {
		display: flex;
		align-items: center;
		gap: 4px;
		height: 30px;
		padding: 0 6px 0 8px;
		border-radius: 4px;
		background: #3b4553;
		color: #d0d5dc;
		font-size: 18px;
		font-weight: 400;
	}
	.answer {
		display: block;
		width: 100%;
		height: 51px;
		padding: 0 18px;
		border: 0;
		border-radius: 5px;
		background: #17202e;
		color: #9fef00;
		font-size: 20px;
	}
	.actions {
		display: flex;
		justify-content: flex-end;
		gap: 5px;
		margin: 34px 11px 0 0;
	}
	.actions button {
		height: 51px;
		padding: 0 17px;
		gap: 15px;
		border-radius: 5px;
		font-size: 18px;
		font-weight: 500;
	}
	.submit {
		background: #0764b7;
		color: #a9bdd5;
	}
	.actions .hint {
		border: 1px solid #a67b1b;
		color: #a67b1b;
	}

	.pager {
		display: flex;
		align-items: center;
		gap: 11px;
		height: 104px;
		margin-top: 44px;
		padding: 0 28px 2px 27px;
		border-radius: 5px;
		background: #111a26;
		color: #fff;
		font-size: 18px;
		font-weight: 500;
	}
	.step {
		height: 53px;
		padding: 0 17px;
		gap: 8px;
		border-radius: 5px;
		background: #1a2332;
	}
	.streak {
		margin-left: auto;
		margin-right: 10px;
		font-weight: 600;
	}
	.complete {
		height: 51px;
		padding: 0 16px;
		gap: 5px;
		border: 1px solid #9fef00;
		border-radius: 5px;
		color: #9fef00;
	}

	.footer {
		height: 82px;
		padding: 0 36px 0 28px;
		display: flex;
		align-items: center;
		justify-content: flex-end;
		gap: 13px;
		background: #283241;
		font-size: 19px;
	}
	.brand {
		display: flex;
		align-items: center;
		gap: 6px;
		color: #9fef00;
	}
	.wordmark {
		color: #fff;
		font-family: 'Inter', sans-serif;
		font-size: 16px;
		font-weight: 700;
	}
	.wordmark i {
		font-style: normal;
		font-weight: 300;
	}
	.notes {
		position: absolute;
		right: 1px;
		top: 401px;
		width: 42px;
		height: 68px;
		border-radius: 5px;
		background: #9fef00;
	}
	.chat {
		position: absolute;
		right: 27px;
		bottom: 27px;
		width: 66px;
		height: 66px;
		border-radius: 50%;
		background: #86cb00;
		color: #fff;
	}
	.scroll-thumb {
		position: absolute;
		right: 4px;
		bottom: 15px;
		width: 2px;
		height: 91px;
		background: #8f949c;
	}

	.taskbar {
		display: flex;
		align-items: center;
		height: 60px;
		padding: 0 23px 2px 267px;
		border-top: 1px solid #3d4245;
		background: #1c1c1c;
		font-family: 'Open Sans', 'Noto Sans', sans-serif;
		font-size: 15px;
		line-height: 20px;
	}
	.apps {
		display: flex;
	}
	.apps button {
		position: relative;
		width: 55px;
		height: 57px;
	}
	.running::after {
		content: '';
		position: absolute;
		bottom: 4px;
		width: 8px;
		height: 4px;
		border-radius: 2px;
		background: #9a9a9a;
	}
	.app-badge {
		position: absolute;
		left: 29px;
		top: 7px;
		width: 20px;
		height: 20px;
		border-radius: 50%;
		background: #a9bcc0;
		color: #1c2a2c;
	}
	.tray {
		display: flex;
		align-items: center;
		margin-left: auto;
	}
	.tray button {
		width: 40px;
	}
	.tray .system {
		width: auto;
		gap: 10px;
		margin-left: 10px;
	}
	.clock {
		display: flex;
		flex-direction: column;
		align-items: flex-end;
		margin-left: 20px;
	}
</style>
